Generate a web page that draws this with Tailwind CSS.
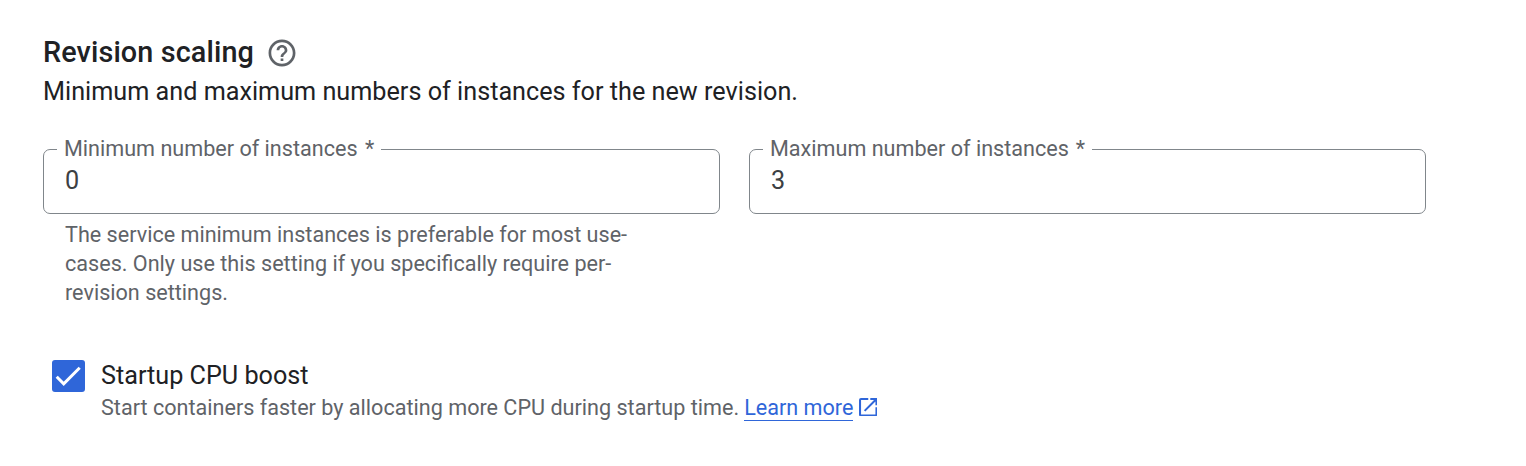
<!DOCTYPE html>
<html lang="en">
<head>
<meta charset="utf-8">
<title>Revision scaling</title>
<script src="https://cdn.jsdelivr.net/npm/@tailwindcss/browser@4"></script>
</head>
<body class="h-[466px] overflow-hidden bg-white font-['Roboto',sans-serif] text-[#202124]">
<main class="pl-[43px] pt-[35px]">
  <div class="flex h-9 items-center">
    <h2 class="w-[225px] whitespace-nowrap pb-px text-[28.8px] font-medium leading-[35px] tracking-[0.12px]">Revision scaling</h2>
    <svg class="size-[28px]" viewBox="1.600 1.600 20.800 20.800" fill="#5f6368"><path d="M11 18h2v-2h-2v2zm1-16C6.480 2 2 6.480 2 12s4.480 10 10 10 10-4.480 10-10S17.520 2 12 2zm0 18c-4.410 0-8-3.590-8-8s3.590-8 8-8 8 3.590 8 8-3.590 8-8 8zm0-14c-2.210 0-4 1.790-4 4h2c0-1.100.9-2 2-2s2 .9 2 2c0 2-3 1.750-3 5h2c0-2.250 3-2.500 3-5 0-2.210-1.790-4-4-4z"/></svg>
  </div>
  <p class="mt-[3px] whitespace-nowrap text-[25.2px] leading-9 tracking-[0.01px]">Minimum and maximum numbers of instances for the new revision.</p>
  <div class="mt-[25px] flex gap-[29px]">
    <div class="w-[677px]">
      <fieldset class="h-[79px] rounded-[7px] border border-[#80868b] pl-[13px]">
        <legend class="px-[7px] text-[21.6px] leading-7 text-[#5f6368]">Minimum number of instances<span class="ml-[2px]"> *</span></legend>
        <div class="pl-[8px] pt-[2px] text-[25.2px] leading-8 text-[#3c4043]">0</div>
      </fieldset>
      <p class="mt-[6px] pl-[22px] text-[21.6px] leading-[29px] text-[#5f6368]">The service minimum instances is preferable for most use-<br>cases. Only use this setting if you specifically require per-<br>revision settings.</p>
    </div>
    <fieldset class="h-[79px] w-[677px] rounded-[7px] border border-[#80868b] pl-[13px]">
      <legend class="px-[7px] text-[21.6px] leading-7 text-[#5f6368]">Maximum number of instances<span class="ml-[1.5px]"> *</span></legend>
      <div class="pl-[8px] pt-[2px] text-[25.2px] leading-8 text-[#3c4043]">3</div>
    </fieldset>
  </div>
  <div class="mt-[53px] flex gap-4 pl-[9px]">
    <div class="flex h-8 w-[33px] shrink-0 rounded-[3px] bg-[#2f66d9]"><svg class="h-8 w-[33px]" viewBox="0 0 33 32" fill="none" stroke="white" stroke-width="3"><path d="m4.700 16.800 7 7L27.700 7.800"/></svg></div>
    <div>
      <div class="text-[25.2px] leading-8">Startup CPU boost</div>
      <div class="flex items-center whitespace-nowrap text-[21.6px] leading-8 text-[#5f6368]"><span>Start containers faster by allocating more CPU during startup time.</span><a class="ml-[5px] border-b border-[#2f66d9] leading-[25px] text-[#2f66d9]">Learn more</a><svg class="mb-[2px] ml-[5.5px] size-[18.5px]" viewBox="3 3 18 18" fill="#2f66d9"><path d="M19 19H5V5h7V3H5a2 2 0 0 0-2 2v14a2 2 0 0 0 2 2h14c1.100 0 2-.9 2-2v-7h-2v7zM14 3v2h3.590l-9.830 9.830 1.410 1.410L19 6.410V10h2V3h-7z"/></svg></div>
    </div>
  </div>
</main>
</body>
</html>
